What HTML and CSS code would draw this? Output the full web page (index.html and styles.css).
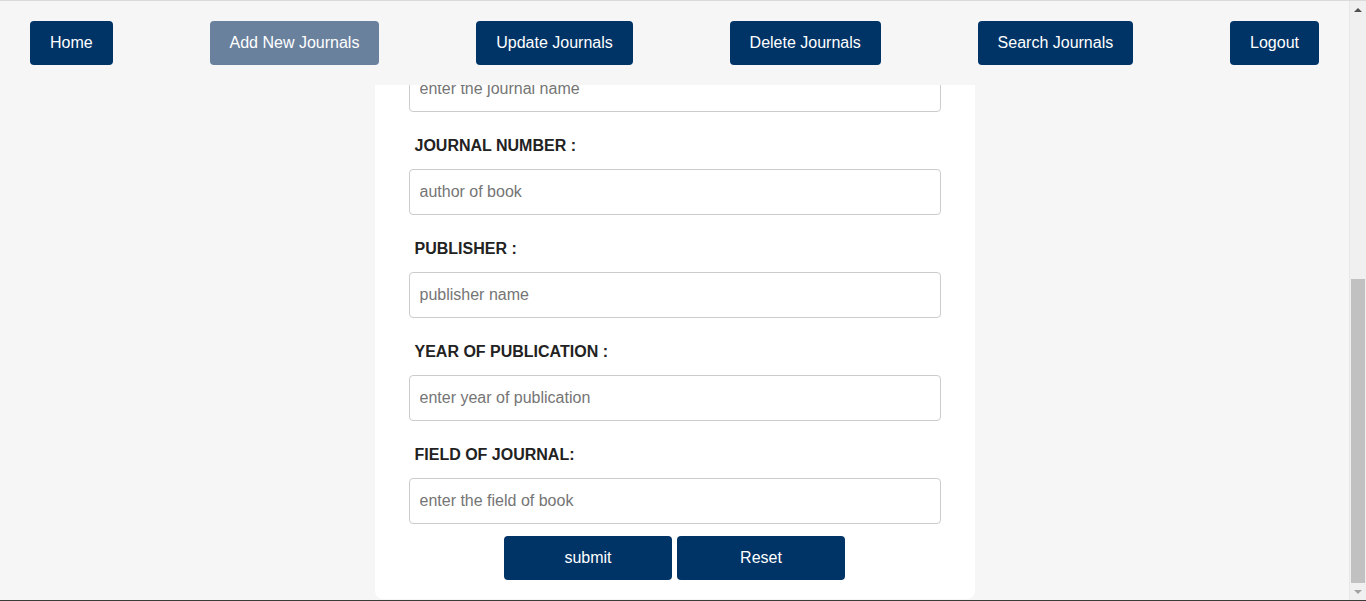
FILE: index.html
```html
<!DOCTYPE html>
<html lang="en">
<head>
<meta charset="utf-8">
<title>Add New Journal</title>
<link rel="stylesheet" href="styles.css">
</head>
<body>
<div class="window">
  <div class="viewport">
    <div class="page">
      <nav class="nav">
        <a class="nav-btn" href="#">Home</a>
        <a class="nav-btn active" href="#">Add New Journals</a>
        <a class="nav-btn" href="#">Update Journals</a>
        <a class="nav-btn" href="#">Delete Journals</a>
        <a class="nav-btn" href="#">Search Journals</a>
        <a class="nav-btn" href="#">Logout</a>
      </nav>
      <main class="content">
        <form class="card">
          <input class="field-input" type="text" aria-label="JOURNAL NAME" placeholder="enter the journal name">
          <label class="field-label">JOURNAL NUMBER :</label>
          <input class="field-input" type="text" placeholder="author of book">
          <label class="field-label">PUBLISHER :</label>
          <input class="field-input" type="text" placeholder="publisher name">
          <label class="field-label">YEAR OF PUBLICATION :</label>
          <input class="field-input" type="text" placeholder="enter year of publication">
          <label class="field-label">FIELD OF JOURNAL:</label>
          <input class="field-input" type="text" placeholder="enter the field of book">
          <div class="actions">
            <button class="act-btn" type="button">submit</button>
            <button class="act-btn" type="button">Reset</button>
          </div>
        </form>
      </main>
    </div>
    <div class="scrollbar">
      <div class="sb-arrow sb-up"></div>
      <div class="sb-track">
        <div class="sb-thumb"></div>
      </div>
      <div class="sb-arrow sb-down"></div>
    </div>
  </div>
</div>
</body>
</html>
```
FILE: styles.css
```css
* { box-sizing: border-box; }
html, body {
  margin: 0;
  padding: 0;
  height: 601px;
  overflow: hidden;
}
body {
  font-family: "Liberation Sans", Arial, sans-serif;
  background: #f6f6f6;
}
.window {
  height: 601px;
  display: flex;
  flex-direction: column;
  border-top: 1px solid #dadada;
  border-bottom: 1px solid #3a3a3a;
}
.viewport {
  flex: 1;
  display: flex;
  min-height: 0;
}
.page {
  flex: 1;
  display: flex;
  flex-direction: column;
  background: #f6f6f6;
  min-width: 0;
  min-height: 0;
}
.nav {
  height: 84px;
  flex: none;
  display: flex;
  justify-content: space-between;
  align-items: flex-start;
  padding: 20px 30px 0;
  background: #f6f6f6;
}
.nav-btn {
  display: block;
  height: 44px;
  line-height: 44px;
  padding: 0 20px;
  font-size: 16px;
  color: #ffffff;
  background: #003366;
  border-radius: 4px;
  text-decoration: none;
  white-space: nowrap;
}
.nav-btn.active {
  background: #6a819e;
}
.content {
  flex: 1;
  min-height: 0;
  overflow: hidden;
  display: flex;
  justify-content: center;
}
.card {
  width: 600px;
  margin-top: -29px;
  align-self: flex-start;
  background: #ffffff;
  border-radius: 8px;
  padding: 10px 34px 19px;
  display: flex;
  flex-direction: column;
}
.field-label {
  display: block;
  margin: 24px 6px 14px;
  font-size: 16px;
  font-weight: bold;
  line-height: 19px;
  color: #222222;
}
.field-input {
  display: block;
  width: 100%;
  height: 46px;
  border: 1px solid #cccccc;
  border-radius: 4px;
  padding: 0 10px;
  font-family: "Liberation Sans", Arial, sans-serif;
  font-size: 16px;
  color: #222222;
  background: #ffffff;
}
.field-input::placeholder {
  color: #757575;
}
.actions {
  display: flex;
  justify-content: center;
  gap: 5px;
  margin-top: 12px;
}
.act-btn {
  width: 168px;
  height: 44px;
  border: none;
  border-radius: 4px;
  background: #003366;
  color: #ffffff;
  font-family: "Liberation Sans", Arial, sans-serif;
  font-size: 16px;
  padding: 0;
}
.scrollbar {
  width: 17px;
  flex: none;
  background: #f0f0f0;
  border-left: 1px solid #e8e8e8;
  display: flex;
  flex-direction: column;
}
.sb-arrow {
  height: 17px;
  flex: none;
  display: flex;
  justify-content: center;
  align-items: center;
}
.sb-up::before {
  content: "";
  width: 0;
  height: 0;
  border-left: 4px solid transparent;
  border-right: 4px solid transparent;
  border-bottom: 4px solid #505050;
}
.sb-down::before {
  content: "";
  width: 0;
  height: 0;
  border-left: 4px solid transparent;
  border-right: 4px solid transparent;
  border-top: 4px solid #a3a3a3;
}
.sb-track {
  flex: 1;
  display: flex;
  flex-direction: column;
  justify-content: flex-end;
  padding: 0 1px 0 1px;
}
.sb-thumb {
  height: 304px;
  background: #c1c1c1;
}
```
